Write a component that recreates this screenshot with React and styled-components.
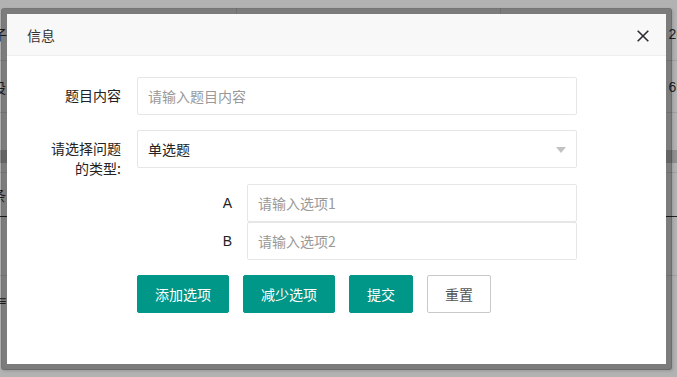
import React from 'react';
import styled, { createGlobalStyle } from 'styled-components';

const Global = createGlobalStyle`
  html, body { margin: 0; padding: 0; background: #fff; }
  body {
    font-family: "Noto Sans CJK SC", "Liberation Sans", sans-serif;
    overflow: hidden;
  }
  * { box-sizing: border-box; }
`;

const Page = styled.div`
  position: relative;
  width: 677px;
  height: 377px;
  overflow: hidden;
  background: #fff;
`;

/* ---------- background page (behind the mask) ---------- */
const BgTable = styled.div`
  display: flex;
  flex-direction: column;
  width: 677px;
  font-size: 14px;
  color: #333;
`;

const BgRow = styled.div`
  display: grid;
  grid-template-columns: 236px 264px 1fr;
  height: ${(p) => p.$h}px;
  padding-top: ${(p) => p.$pt || 0}px;
  border-bottom: 1px solid ${(p) => p.$line || 'transparent'};
  background: ${(p) => p.$bg || 'transparent'};
`;

const BgCell = styled.div`
  display: flex;
  align-items: center;
  justify-content: ${(p) => (p.$end ? 'flex-end' : 'flex-start')};
  border-left: ${(p) => (p.$divider ? '1px solid #e6e6e6' : 'none')};
  overflow: hidden;
  white-space: nowrap;
`;

const BgText = styled.span`
  margin-left: ${(p) => p.$ml || 0}px;
  margin-right: ${(p) => p.$mr || 0}px;
  font-family: "Liberation Sans", "Noto Sans CJK SC", sans-serif;
`;

const Mask = styled.div`
  position: absolute;
  inset: 0;
  background: rgba(0, 0, 0, 0.3);
`;

/* ---------- dialog ---------- */
const Layer = styled.div`
  position: absolute;
  left: 1px;
  top: 8px;
  width: 671px;
  height: 362px;
  border: 6px solid rgba(0, 0, 0, 0.3);
  border-radius: 3px;
  background: #fff;
  background-clip: padding-box;
  box-shadow: 1px 1px 3px rgba(0, 0, 0, 0.15);
  display: flex;
  flex-direction: column;
`;

const Header = styled.div`
  height: 42px;
  flex-shrink: 0;
  display: flex;
  align-items: center;
  justify-content: space-between;
  padding: 0 17px 0 20px;
  background: #f8f8f8;
  border-bottom: 1px solid #eee;
  font-size: 14px;
  color: #333;
`;

const CloseBtn = styled.span`
  display: flex;
  width: 12px;
  height: 12px;
  margin-top: 2px;
  cursor: pointer;
`;

const Body = styled.div`
  padding-top: 21px;
  display: flex;
  flex-direction: column;
`;

const Field = styled.div`
  display: flex;
  height: 38px;
  margin-bottom: ${(p) => p.$mb || 0}px;
`;

const Label = styled.label`
  width: 130px;
  flex-shrink: 0;
  padding: 8px 16px 0 34px;
  font-size: 14px;
  line-height: 20px;
  color: #222;
  text-align: right;
`;

const Input = styled.input`
  width: ${(p) => p.$w}px;
  height: 38px;
  padding: 0 10px;
  border: 1px solid #e6e6e6;
  border-radius: 2px;
  background: #fff;
  font-family: "Noto Sans CJK SC", "Liberation Sans", sans-serif;
  font-size: 14px;
  color: #333;
  outline: none;
  &::placeholder {
    color: #999;
  }
`;

const Select = styled.div`
  width: 440px;
  height: 38px;
  display: flex;
  align-items: center;
  justify-content: space-between;
  padding: 0 10px;
  border: 1px solid #e6e6e6;
  border-radius: 2px;
  font-size: 14px;
  color: #222;
  cursor: pointer;
`;

const Caret = styled.i`
  width: 0;
  height: 0;
  border-style: solid;
  border-width: 6px 5px 0 5px;
  border-color: #c2c2c2 transparent transparent transparent;
  margin-top: 1px;
`;

const OptionRow = styled.div`
  display: flex;
  height: 38px;
  padding-left: 130px;
  margin-bottom: ${(p) => p.$mb || 0}px;
`;

const OptionLabel = styled.span`
  width: 110px;
  padding-right: 15px;
  text-align: right;
  line-height: 38px;
  font-family: "Liberation Sans", "Noto Sans CJK SC", sans-serif;
  font-size: 14px;
  color: #222;
`;

const Buttons = styled.div`
  display: flex;
  gap: 14px;
  padding-left: 130px;
`;

const Button = styled.button`
  height: 38px;
  padding: 0 17px;
  border-radius: 2px;
  border: 1px solid ${(p) => (p.$plain ? '#c9c9c9' : '#009688')};
  background: ${(p) => (p.$plain ? '#fff' : '#009688')};
  color: ${(p) => (p.$plain ? '#555' : '#fff')};
  font-family: "Noto Sans CJK SC", "Liberation Sans", sans-serif;
  font-size: 14px;
  line-height: 36px;
  cursor: pointer;
  white-space: nowrap;
`;

function CloseIcon() {
  return (
    <svg width="12" height="12" viewBox="0 0 12 12">
      <path d="M0.7 0.7 L11.3 11.3 M11.3 0.7 L0.7 11.3" stroke="#2b2b33" strokeWidth="1.6" fill="none" />
    </svg>
  );
}

export default function App() {
  return (
    <Page>
      <Global />
      <BgTable>
        <BgRow $h={61} $pt={8} $line="#e6e6e6">
          <BgCell><BgText $ml={-7}>子</BgText></BgCell>
          <BgCell $divider />
          <BgCell $divider $end><BgText $mr={-7}>26</BgText></BgCell>
        </BgRow>
        <BgRow $h={52} $pt={0} $line="#e6e6e6">
          <BgCell><BgText $ml={-8}>设</BgText></BgCell>
          <BgCell $divider />
          <BgCell $divider $end><BgText $mr={-7}>69</BgText></BgCell>
        </BgRow>
        <BgRow $h={37} />
        <BgRow $h={13} $bg="#cfcfcf" />
        <BgRow $h={10} $line="#e6e6e6" />
        <BgRow $h={44} $line="#333">
          <BgCell><BgText $ml={-8}>条</BgText></BgCell>
          <BgCell />
          <BgCell />
        </BgRow>
        <BgRow $h={59} $line="#e6e6e6" />
        <BgRow $h={50}>
          <BgCell><BgText $ml={-2}>≡</BgText></BgCell>
          <BgCell />
          <BgCell />
        </BgRow>
      </BgTable>
      <Mask />
      <Layer>
        <Header>
          <span>信息</span>
          <CloseBtn><CloseIcon /></CloseBtn>
        </Header>
        <Body>
          <Field $mb={15}>
            <Label>题目内容</Label>
            <Input $w={440} placeholder="请输入题目内容" />
          </Field>
          <Field $mb={16}>
            <Label>请选择问题的类型:</Label>
            <Select>
              <span>单选题</span>
              <Caret />
            </Select>
          </Field>
          <OptionRow>
            <OptionLabel>A</OptionLabel>
            <Input $w={330} placeholder="请输入选项1" />
          </OptionRow>
          <OptionRow $mb={15}>
            <OptionLabel>B</OptionLabel>
            <Input $w={330} placeholder="请输入选项2" />
          </OptionRow>
          <Buttons>
            <Button>添加选项</Button>
            <Button>减少选项</Button>
            <Button>提交</Button>
            <Button $plain>重置</Button>
          </Buttons>
        </Body>
      </Layer>
    </Page>
  );
}
